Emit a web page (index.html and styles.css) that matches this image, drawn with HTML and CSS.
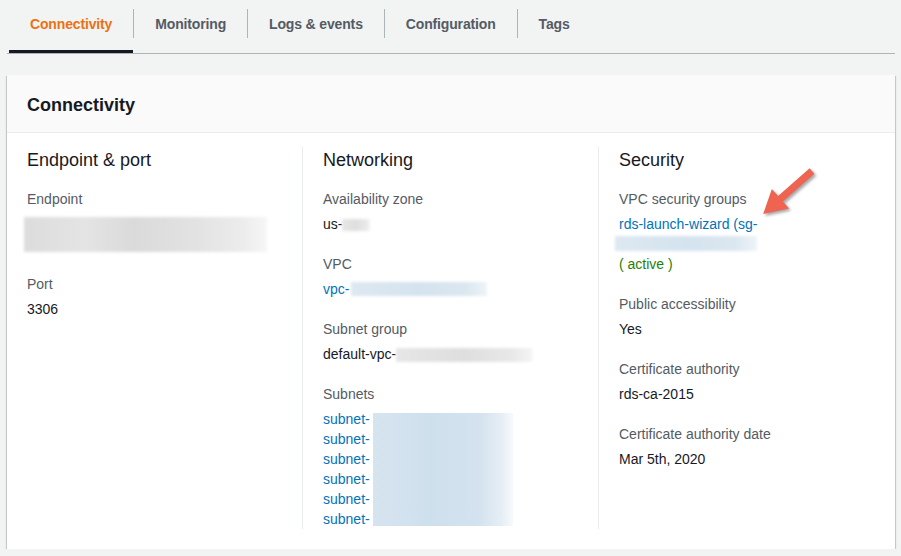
FILE: index.html
```html
<!DOCTYPE html>
<html lang="en">
<head>
<meta charset="utf-8">
<title>Connectivity</title>
<link rel="stylesheet" href="styles.css">
</head>
<body>
<div class="page">
  <nav class="tabs">
    <a class="tab active">Connectivity</a>
    <span class="tab-sep"></span>
    <a class="tab">Monitoring</a>
    <span class="tab-sep"></span>
    <a class="tab">Logs &amp; events</a>
    <span class="tab-sep"></span>
    <a class="tab">Configuration</a>
    <span class="tab-sep"></span>
    <a class="tab">Tags</a>
  </nav>

  <section class="card">
    <header class="card-header"><h2>Connectivity</h2></header>
    <div class="card-body">
      <div class="col">
        <h3>Endpoint &amp; port</h3>
        <div class="item">
          <div class="label">Endpoint</div>
          <div class="value value-2"><span class="blur blur-endpoint"></span></div>
        </div>
        <div class="item">
          <div class="label">Port</div>
          <div class="value">3306</div>
        </div>
      </div>

      <div class="col">
        <h3>Networking</h3>
        <div class="item">
          <div class="label">Availability zone</div>
          <div class="value">us-<span class="blur blur-gray blur-zone"></span></div>
        </div>
        <div class="item">
          <div class="label">VPC</div>
          <div class="value"><a class="link">vpc-</a><span class="blur blur-blue blur-vpc"></span></div>
        </div>
        <div class="item">
          <div class="label">Subnet group</div>
          <div class="value">default-vpc-<span class="blur blur-gray blur-sgroup"></span></div>
        </div>
        <div class="item">
          <div class="label">Subnets</div>
          <div class="value subnets">
            <div class="subnet"><a class="link">subnet-</a><span class="blur-row first"></span></div>
            <div class="subnet"><a class="link">subnet-</a><span class="blur-row"></span></div>
            <div class="subnet"><a class="link">subnet-</a><span class="blur-row"></span></div>
            <div class="subnet"><a class="link">subnet-</a><span class="blur-row"></span></div>
            <div class="subnet"><a class="link">subnet-</a><span class="blur-row"></span></div>
            <div class="subnet"><a class="link">subnet-</a><span class="blur-row last"></span></div>
          </div>
        </div>
      </div>

      <div class="col">
        <h3>Security</h3>
        <div class="item">
          <div class="label">VPC security groups</div>
          <div class="value">
            <a class="link">rds-launch-wizard (sg-</a>
            <div class="sg-line"><span class="blur blur-blue blur-sg"></span></div>
            <div class="status">( active )</div>
          </div>
        </div>
        <div class="item">
          <div class="label">Public accessibility</div>
          <div class="value">Yes</div>
        </div>
        <div class="item">
          <div class="label">Certificate authority</div>
          <div class="value">rds-ca-2015</div>
        </div>
        <div class="item">
          <div class="label">Certificate authority date</div>
          <div class="value">Mar 5th, 2020</div>
        </div>
      </div>
    </div>
  </section>

  <svg class="arrow" width="80" height="70" viewBox="0 0 80 70" aria-hidden="true">
    <g transform="translate(62 10) rotate(138.7)">
      <polygon points="0,-3.6 42,-3.6 42,-13 65,0 42,13 42,3.6 0,3.6" fill="#ef6351"/>
    </g>
  </svg>
</div>
</body>
</html>
```

FILE: styles.css
```css
* { box-sizing: border-box; }

html, body {
  margin: 0;
  padding: 0;
  background: #f2f3f3;
}

body {
  font-family: "Liberation Sans", Arial, sans-serif;
  font-size: 14px;
  line-height: 20px;
  color: #16191f;
}

.page {
  position: relative;
  padding: 0 6px 0 7px;
}

/* Tabs */
.tabs {
  display: flex;
  align-items: flex-start;
  height: 54px;
  border-bottom: 1px solid #aab7b8;
  padding-left: 2px;
}

.tab {
  display: block;
  height: 53px;
  padding: 14px 21px 0 21px;
  font-weight: bold;
  font-size: 14px;
  line-height: 20px;
  letter-spacing: -0.15px;
  color: #545b64;
  border-bottom: 3px solid transparent;
  cursor: pointer;
}

.tab.active {
  color: #ec7211;
  border-bottom-color: #16191f;
}

.tab-sep {
  width: 1px;
  height: 29px;
  margin-top: 9px;
  background: #aab7b8;
  flex: none;
}

/* Card */
.card {
  margin-top: 21px;
  background: #fff;
  box-shadow: 0 1px 1px 0 rgba(0, 28, 36, 0.3), 1px 1px 1px 0 rgba(0, 28, 36, 0.15), -1px 1px 1px 0 rgba(0, 28, 36, 0.15);
}

.card-header {
  background: #fafafa;
  border-bottom: 1px solid #eaeded;
  padding: 18px 20px 15px;
}

.card-header h2 {
  margin: 0;
  font-size: 18px;
  line-height: 24px;
  font-weight: bold;
  color: #16191f;
}

.card-body {
  display: grid;
  grid-template-columns: 295px 296px 1fr;
  padding: 14px 0 20px;
}

.col {
  padding: 1px 20px 0;
}

.col + .col {
  border-left: 1px solid #eaeded;
}

.col h3 {
  margin: 0;
  font-size: 18px;
  line-height: 24px;
  font-weight: normal;
  color: #16191f;
}

.item {
  margin-top: 20px;
}

.col h3 + .item {
  margin-top: 17px;
}

.label {
  color: #545b64;
}

.value {
  margin-top: 5px;
  color: #16191f;
}

.value-2 {
  height: 40px;
}

.link {
  color: #0073bb;
  cursor: pointer;
}

.status {
  color: #1d8102;
}

/* Redacted (blurred) values */
.blur {
  display: inline-block;
  vertical-align: top;
  filter: blur(1.5px);
}

.blur-endpoint {
  width: 243px;
  height: 35px;
  margin: 3px 0 0 -3px;
  background:
    linear-gradient(90deg, #dcdcdc 0%, #e4e4e4 25%, #dadada 45%, #e2e2e2 70%, #ececec 90%, #f6f6f6 100%);
}

.blur-gray {
  background: linear-gradient(90deg, #e6e6e6, #dedede 50%, #e8e8e8 85%, #f4f4f4);
}

.blur-blue {
  background: linear-gradient(90deg, #dde8f1, #d4e3ee 50%, #dbe7f0 85%, #eef4f8);
}

.blur-zone {
  width: 28px;
  height: 12px;
  margin: 5px 0 0 0;
}

.blur-vpc {
  width: 136px;
  height: 14px;
  margin: 3px 0 0 2px;
}

.blur-sgroup {
  width: 136px;
  height: 14px;
  margin: 4px 0 0 0;
}

.sg-line {
  height: 20px;
}

.blur-sg {
  width: 142px;
  height: 15px;
  margin: 2px 0 0 -4px;
}

.subnet {
  display: flex;
  height: 20px;
}

.blur-row {
  display: block;
  width: 140px;
  height: 20px;
  margin-left: 3px;
  background: linear-gradient(90deg, #d6e4ef, #cfe0ed 40%, #d3e2ee 75%, #e6eef5 92%, #f7fafc);
}

.blur-row.first {
  margin-top: 4px;
  height: 16px;
}

.blur-row.last {
  height: 17px;
}

.subnets {
  height: 120px;
}

/* Annotation arrow */
.arrow {
  position: absolute;
  left: 750px;
  top: 161px;
  filter: drop-shadow(2px 2px 1.5px rgba(0, 0, 0, 0.35));
}
```
